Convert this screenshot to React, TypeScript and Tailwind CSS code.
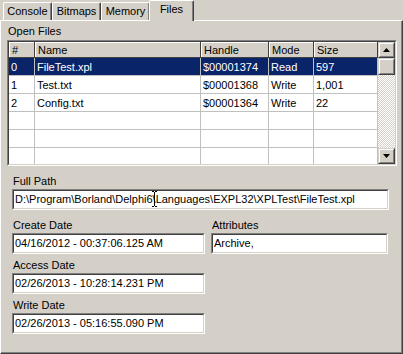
import React from 'react'

const tabs = ['Console', 'Bitmaps', 'Memory']

const columns = [
  { title: '#', w: 'w-[26px]' },
  { title: 'Name', w: 'w-[166px]' },
  { title: 'Handle', w: 'w-[68px]' },
  { title: 'Mode', w: 'w-[45px]' },
  { title: 'Size', w: 'w-[64px]' },
]

const rows = [
  ['0', 'FileTest.xpl', '$00001374', 'Read', '597'],
  ['1', 'Test.txt', '$00001368', 'Write', '1,001'],
  ['2', 'Config.txt', '$00001364', 'Write', '22'],
  ['', '', '', '', ''],
  ['', '', '', '', ''],
  ['', '', '', '', ''],
]

function Raised({ className, children }: { className?: string; children?: React.ReactNode }) {
  return (
    <div className={`border border-t-[#d4d0c8] border-l-[#d4d0c8] border-r-[#404040] border-b-[#404040] bg-[#d4d0c8] ${className ?? ''}`}>
      <div className="flex h-full w-full items-center justify-center border border-t-white border-l-white border-r-[#808080] border-b-[#808080]">
        {children}
      </div>
    </div>
  )
}

function Sunken({ className, children }: { className?: string; children?: React.ReactNode }) {
  return (
    <div className={`border border-t-[#808080] border-l-[#808080] border-r-white border-b-white ${className ?? ''}`}>
      <div className="h-full w-full overflow-hidden border border-t-[#404040] border-l-[#404040] border-r-[#d4d0c8] border-b-[#d4d0c8] bg-white">
        {children}
      </div>
    </div>
  )
}

function Field({ label, value, width }: { label: string; value: React.ReactNode; width: string }) {
  return (
    <div className={`flex flex-col ${width}`}>
      <div className="h-[13px] pl-[1px]">{label}</div>
      <Sunken className="mt-[1px] h-[21px]">
        <div className="flex h-full items-center pl-[1px] whitespace-nowrap">{value}</div>
      </Sunken>
    </div>
  )
}

function Arrow({ up }: { up?: boolean }) {
  return (
    <svg width="7" height="4" viewBox="0 0 7 4" className={up ? '' : 'rotate-180'}>
      <path d="M3.5 0 L7 4 L0 4 Z" fill="#000" />
    </svg>
  )
}

// mouse I-beam sitting over the path text
function IBeam() {
  return (
    <span className="relative inline-block w-0">
      <svg width="5" height="16" viewBox="0 0 5 16" className="absolute -left-[1px] -top-[9px]">
        <path d="M0 0.5 H2 M3 0.5 H5 M2.5 1 V15 M0 15.5 H2 M3 15.5 H5" stroke="#000" strokeWidth="1" fill="none" />
      </svg>
    </span>
  )
}

export default function App() {
  return (
    <div className="h-[354px] w-[403px] overflow-hidden bg-[#d4d0c8] font-['Liberation_Sans',Arial,sans-serif] text-[11px] leading-[13px] text-black">
      <div className="flex h-[20px] items-end pl-[3px]">
        {tabs.map((t) => (
          <div
            key={t}
            className="flex h-[18px] w-[49px] justify-center rounded-t-[2px] border-t border-l border-r border-t-white border-l-white border-r-[#404040] pt-[2px] shadow-[inset_-1px_0_0_#808080]"
          >
            {t}
          </div>
        ))}
        <div className="relative z-10 -mb-[1px] -ml-[1px] flex h-[21px] w-[45px] justify-center rounded-t-[2px] border-t border-l border-r border-t-white border-l-white border-r-[#404040] bg-[#d4d0c8] pt-[2px] shadow-[inset_-1px_0_0_#808080]">
          Files
        </div>
      </div>

      <div className="h-[334px] border border-t-white border-l-white border-r-[#404040] border-b-[#404040]">
        <div className="h-full w-full border-r border-b border-r-[#808080] border-b-[#808080] pl-[6px] pt-[4px]">
          <div className="h-[13px] pl-[1px]">Open Files</div>
          <Sunken className="mt-[2px] h-[126px] w-[390px]">
            <div className="flex h-full">
              <div className="w-[369px]">
                <div className="flex h-[16px]">
                  {columns.map((c) => (
                    <div
                      key={c.title}
                      className={`${c.w} h-full border-r border-b border-r-[#404040] border-b-[#404040] bg-[#d4d0c8]`}
                    >
                      <div className="h-full border-t border-l border-t-white border-l-white pl-[2px] pt-[1px]">{c.title}</div>
                    </div>
                  ))}
                </div>
                {rows.map((r, i) => (
                  <div key={i} className={`flex h-[18px] ${i === 0 ? 'bg-[#0a246a] text-white' : 'bg-white'}`}>
                    {r.map((v, j) => (
                      <div
                        key={j}
                        className={`${columns[j].w} h-full border-r border-b border-[#c0c0c0] pl-[2px] pt-[3px] whitespace-nowrap`}
                      >
                        {v}
                      </div>
                    ))}
                  </div>
                ))}
              </div>
              <div className="flex w-[17px] flex-col">
                <Raised className="h-[16px]">
                  <Arrow up />
                </Raised>
                <div className="flex flex-1 flex-col bg-[repeating-conic-gradient(#d4d0c8_0_25%,#ffffff_0_50%)] bg-[length:2px_2px]">
                  <Raised className="h-[17px]" />
                </div>
                <Raised className="h-[16px]">
                  <Arrow />
                </Raised>
              </div>
            </div>
          </Sunken>

          <div className="ml-[5px] flex flex-col">
            <div className="mt-[9px]">
              <Field
                label="Full Path"
                value={
                  <>
                    D:\Program\Borland\Delphi6
                    <IBeam />
                    \Languages\EXPL32\XPLTest\FileTest.xpl
                  </>
                }
                width="w-[377px]"
              />
            </div>
            <div className="mt-[9px] flex gap-[6px]">
              <Field label="Create Date" value="04/16/2012 - 00:37:06.125 AM" width="w-[193px]" />
              <Field label="Attributes" value="Archive," width="w-[177px]" />
            </div>
            <div className="mt-[5px]">
              <Field label="Access Date" value="02/26/2013 - 10:28:14.231 PM" width="w-[193px]" />
            </div>
            <div className="mt-[5px]">
              <Field label="Write Date" value="02/26/2013 - 05:16:55.090 PM" width="w-[193px]" />
            </div>
          </div>
        </div>
      </div>
    </div>
  )
}
